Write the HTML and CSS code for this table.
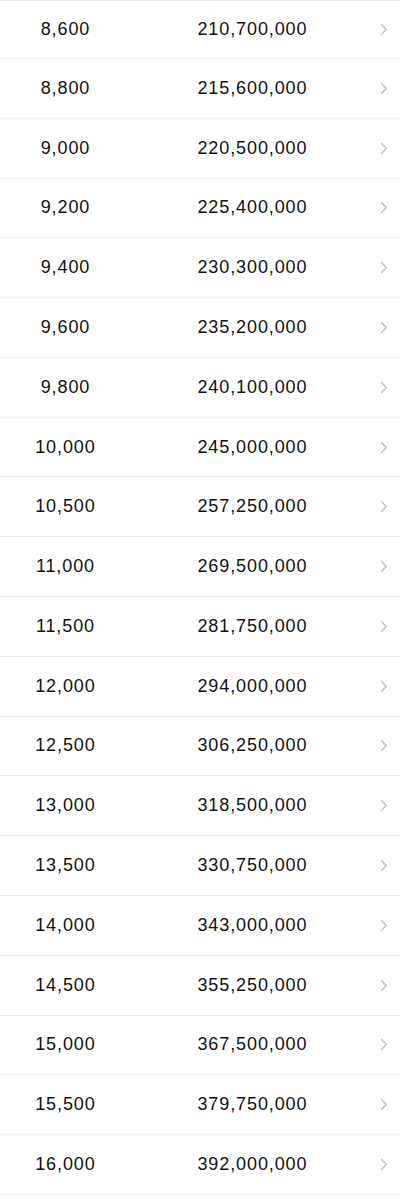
FILE: index.html
```html
<!DOCTYPE html>
<html lang="en">
<head>
<meta charset="utf-8">
<link rel="stylesheet" href="styles.css">
</head>
<body>
<div class="list">
  <div class="row"><span class="qty">8,600</span><span class="amt">210,700,000</span><span class="chev"><svg viewBox="0 0 6 11" width="6" height="11"><path d="M0.6 0.6 L5.2 5.5 L0.6 10.4" /></svg></span></div>
  <div class="row"><span class="qty">8,800</span><span class="amt">215,600,000</span><span class="chev"><svg viewBox="0 0 6 11" width="6" height="11"><path d="M0.6 0.6 L5.2 5.5 L0.6 10.4" /></svg></span></div>
  <div class="row"><span class="qty">9,000</span><span class="amt">220,500,000</span><span class="chev"><svg viewBox="0 0 6 11" width="6" height="11"><path d="M0.6 0.6 L5.2 5.5 L0.6 10.4" /></svg></span></div>
  <div class="row"><span class="qty">9,200</span><span class="amt">225,400,000</span><span class="chev"><svg viewBox="0 0 6 11" width="6" height="11"><path d="M0.6 0.6 L5.2 5.5 L0.6 10.4" /></svg></span></div>
  <div class="row"><span class="qty">9,400</span><span class="amt">230,300,000</span><span class="chev"><svg viewBox="0 0 6 11" width="6" height="11"><path d="M0.6 0.6 L5.2 5.5 L0.6 10.4" /></svg></span></div>
  <div class="row"><span class="qty">9,600</span><span class="amt">235,200,000</span><span class="chev"><svg viewBox="0 0 6 11" width="6" height="11"><path d="M0.6 0.6 L5.2 5.5 L0.6 10.4" /></svg></span></div>
  <div class="row"><span class="qty">9,800</span><span class="amt">240,100,000</span><span class="chev"><svg viewBox="0 0 6 11" width="6" height="11"><path d="M0.6 0.6 L5.2 5.5 L0.6 10.4" /></svg></span></div>
  <div class="row"><span class="qty">10,000</span><span class="amt">245,000,000</span><span class="chev"><svg viewBox="0 0 6 11" width="6" height="11"><path d="M0.6 0.6 L5.2 5.5 L0.6 10.4" /></svg></span></div>
  <div class="row"><span class="qty">10,500</span><span class="amt">257,250,000</span><span class="chev"><svg viewBox="0 0 6 11" width="6" height="11"><path d="M0.6 0.6 L5.2 5.5 L0.6 10.4" /></svg></span></div>
  <div class="row"><span class="qty">11,000</span><span class="amt">269,500,000</span><span class="chev"><svg viewBox="0 0 6 11" width="6" height="11"><path d="M0.6 0.6 L5.2 5.5 L0.6 10.4" /></svg></span></div>
  <div class="row"><span class="qty">11,500</span><span class="amt">281,750,000</span><span class="chev"><svg viewBox="0 0 6 11" width="6" height="11"><path d="M0.6 0.6 L5.2 5.5 L0.6 10.4" /></svg></span></div>
  <div class="row"><span class="qty">12,000</span><span class="amt">294,000,000</span><span class="chev"><svg viewBox="0 0 6 11" width="6" height="11"><path d="M0.6 0.6 L5.2 5.5 L0.6 10.4" /></svg></span></div>
  <div class="row"><span class="qty">12,500</span><span class="amt">306,250,000</span><span class="chev"><svg viewBox="0 0 6 11" width="6" height="11"><path d="M0.6 0.6 L5.2 5.5 L0.6 10.4" /></svg></span></div>
  <div class="row"><span class="qty">13,000</span><span class="amt">318,500,000</span><span class="chev"><svg viewBox="0 0 6 11" width="6" height="11"><path d="M0.6 0.6 L5.2 5.5 L0.6 10.4" /></svg></span></div>
  <div class="row"><span class="qty">13,500</span><span class="amt">330,750,000</span><span class="chev"><svg viewBox="0 0 6 11" width="6" height="11"><path d="M0.6 0.6 L5.2 5.5 L0.6 10.4" /></svg></span></div>
  <div class="row"><span class="qty">14,000</span><span class="amt">343,000,000</span><span class="chev"><svg viewBox="0 0 6 11" width="6" height="11"><path d="M0.6 0.6 L5.2 5.5 L0.6 10.4" /></svg></span></div>
  <div class="row"><span class="qty">14,500</span><span class="amt">355,250,000</span><span class="chev"><svg viewBox="0 0 6 11" width="6" height="11"><path d="M0.6 0.6 L5.2 5.5 L0.6 10.4" /></svg></span></div>
  <div class="row"><span class="qty">15,000</span><span class="amt">367,500,000</span><span class="chev"><svg viewBox="0 0 6 11" width="6" height="11"><path d="M0.6 0.6 L5.2 5.5 L0.6 10.4" /></svg></span></div>
  <div class="row"><span class="qty">15,500</span><span class="amt">379,750,000</span><span class="chev"><svg viewBox="0 0 6 11" width="6" height="11"><path d="M0.6 0.6 L5.2 5.5 L0.6 10.4" /></svg></span></div>
  <div class="row"><span class="qty">16,000</span><span class="amt">392,000,000</span><span class="chev"><svg viewBox="0 0 6 11" width="6" height="11"><path d="M0.6 0.6 L5.2 5.5 L0.6 10.4" /></svg></span></div>
</div>
</body>
</html>
```

FILE: styles.css
```css
html, body {
  margin: 0;
  padding: 0;
  background: #ffffff;
}

body {
  font-family: "Liberation Sans", Arial, sans-serif;
  color: #111111;
  width: 400px;
  overflow: hidden;
}

.list {
  border-top: 1px solid #ebebeb;
}

.row {
  display: grid;
  grid-template-columns: 130px 1fr 26px;
  align-items: center;
  height: 59.79px;
  box-sizing: border-box;
  padding-bottom: 0;
  border-bottom: 1px solid #ebebeb;
  font-size: 18px;
  letter-spacing: 0.9px;
}

.row:first-child {
  height: 58px;
  padding-bottom: 0.5px;
}

.qty,
.amt {
  text-align: center;
  padding-left: 0.9px;
}

.chev {
  display: flex;
  align-items: center;
  justify-content: flex-start;
  padding-left: 7px;
}

.chev svg {
  display: block;
  fill: none;
  stroke: #b8b8bd;
  stroke-width: 1.2;
  stroke-linecap: round;
  stroke-linejoin: round;
}
```
